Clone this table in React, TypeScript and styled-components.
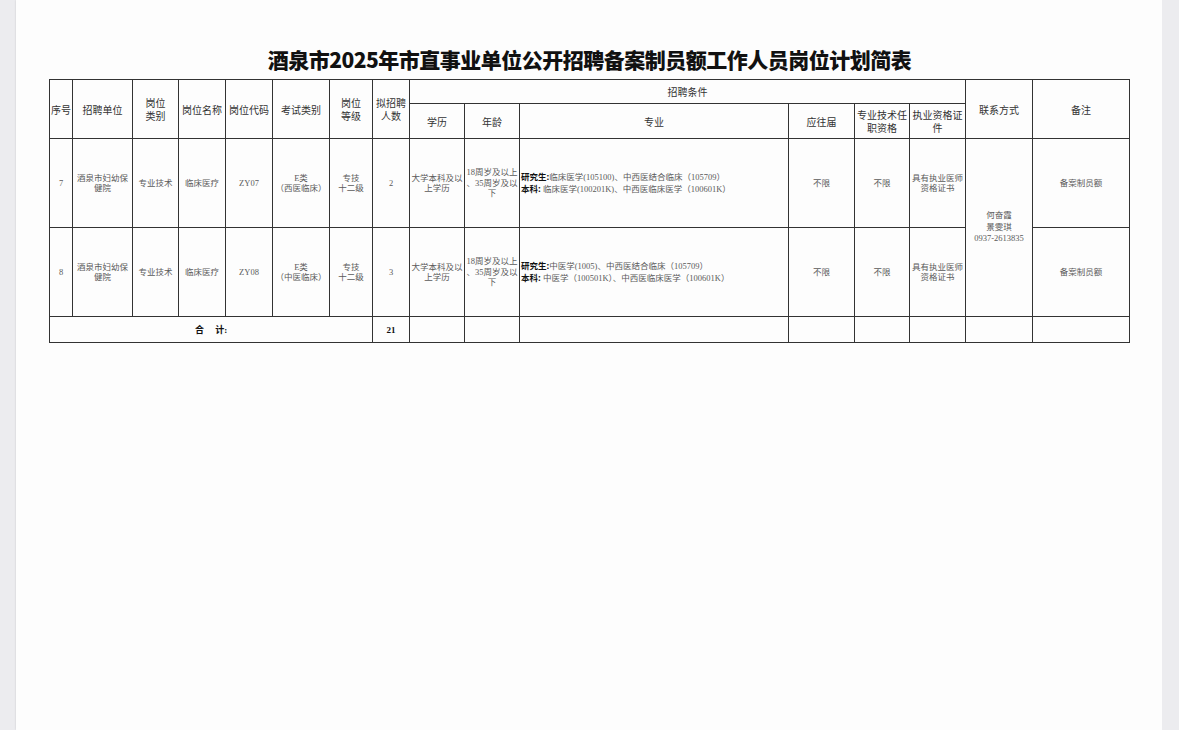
import React from 'react';
import styled, { createGlobalStyle } from 'styled-components';

const GlobalStyle = createGlobalStyle`
  html, body {
    margin: 0;
    padding: 0;
    background: #ececef;
  }
  #root {
    height: 730px;
  }
`;

const CJK_SANS = `"Noto Sans CJK SC", "Noto Sans", sans-serif`;
const CJK_SERIF = `"Liberation Serif", "Noto Sans CJK SC", serif`;

interface RowData {
  no: string;
  unit: string[];
  postType: string;
  postName: string;
  code: string;
  exam: string[];
  level: string[];
  count: string;
  edu: string[];
  age: string[];
  grad: string;
  bachelor: string;
}

const rows: RowData[] = [
  {
    no: '7',
    unit: ['酒泉市妇幼保', '健院'],
    postType: '专业技术',
    postName: '临床医疗',
    code: 'ZY07',
    exam: ['E类', '（西医临床）'],
    level: ['专技', '十二级'],
    count: '2',
    edu: ['大学本科及以', '上学历'],
    age: ['18周岁及以上', '、35周岁及以', '下'],
    grad: '临床医学(105100)、中西医结合临床（105709）',
    bachelor: ' 临床医学(100201K)、中西医临床医学（100601K）',
  },
  {
    no: '8',
    unit: ['酒泉市妇幼保', '健院'],
    postType: '专业技术',
    postName: '临床医疗',
    code: 'ZY08',
    exam: ['E类', '（中医临床）'],
    level: ['专技', '十二级'],
    count: '3',
    edu: ['大学本科及以', '上学历'],
    age: ['18周岁及以上', '、35周岁及以', '下'],
    grad: '中医学(1005)、中西医结合临床（105709）',
    bachelor: ' 中医学（100501K）、中西医临床医学（100601K）',
  },
];

const colWidths = [23, 60, 46, 47, 47, 57, 43, 37, 55, 55, 269, 66, 55, 56, 67, 97];

function Lines({ items }: { items: string[] }) {
  return (
    <>
      {items.map((t, i) => (
        <React.Fragment key={i}>
          {i > 0 && <br />}
          {t}
        </React.Fragment>
      ))}
    </>
  );
}

function App() {
  return (
    <>
      <GlobalStyle />
      <Shell>
        <Gutter />
        <Page>
          <Title>酒泉市2025年市直事业单位公开招聘备案制员额工作人员岗位计划简表</Title>
          <Sheet>
            <colgroup>
              {colWidths.map((w, i) => (
                <col key={i} style={{ width: w }} />
              ))}
            </colgroup>
            <thead>
              <HeadRow height={24}>
                <HeadCell rowSpan={2}>序号</HeadCell>
                <HeadCell rowSpan={2}>招聘单位</HeadCell>
                <HeadCell rowSpan={2}>岗位<br />类别</HeadCell>
                <HeadCell rowSpan={2}>岗位名称</HeadCell>
                <HeadCell rowSpan={2}>岗位代码</HeadCell>
                <HeadCell rowSpan={2}>考试类别</HeadCell>
                <HeadCell rowSpan={2}>岗位<br />等级</HeadCell>
                <HeadCell rowSpan={2}>拟招聘<br />人数</HeadCell>
                <HeadCell colSpan={6}>招聘条件</HeadCell>
                <HeadCell rowSpan={2}>联系方式</HeadCell>
                <HeadCell rowSpan={2}>备注</HeadCell>
              </HeadRow>
              <HeadRow height={35}>
                <HeadCell>学历</HeadCell>
                <HeadCell>年龄</HeadCell>
                <HeadCell>专业</HeadCell>
                <HeadCell>应往届</HeadCell>
                <HeadCell>专业技术任<br />职资格</HeadCell>
                <HeadCell>执业资格证<br />件</HeadCell>
              </HeadRow>
            </thead>
            <tbody>
              {rows.map((r, idx) => (
                <BodyRow key={r.no} height={89}>
                  <Cell>{r.no}</Cell>
                  <Cell><Lines items={r.unit} /></Cell>
                  <Cell>{r.postType}</Cell>
                  <Cell>{r.postName}</Cell>
                  <Cell>{r.code}</Cell>
                  <Cell><Lines items={r.exam} /></Cell>
                  <Cell><Lines items={r.level} /></Cell>
                  <Cell>{r.count}</Cell>
                  <Cell tight><Lines items={r.edu} /></Cell>
                  <Cell tight><Lines items={r.age} /></Cell>
                  <MajorCell>
                    <MajorLabel>研究生:</MajorLabel>{r.grad}
                    <br />
                    <MajorLabel>本科:</MajorLabel>{r.bachelor}
                  </MajorCell>
                  <Cell>不限</Cell>
                  <Cell>不限</Cell>
                  <Cell tight><Lines items={['具有执业医师', '资格证书']} /></Cell>
                  {idx === 0 && (
                    <ContactCell rowSpan={2}>
                      <Lines items={['何奋霞', '景雯琪', '0937-2613835']} />
                    </ContactCell>
                  )}
                  <Cell>备案制员额</Cell>
                </BodyRow>
              ))}
              <BodyRow height={26}>
                <TotalCell colSpan={7}>合&nbsp;&nbsp;&nbsp;&nbsp;&nbsp;计:</TotalCell>
                <TotalCell>21</TotalCell>
                {Array.from({ length: 8 }).map((_, i) => (
                  <Cell key={i} />
                ))}
              </BodyRow>
            </tbody>
          </Sheet>
        </Page>
        <Gutter right />
      </Shell>
    </>
  );
}

const Shell = styled.div`
  display: flex;
  height: 730px;
  background: #ececef;
`;

const Gutter = styled.div<{ right?: boolean }>`
  flex: 0 0 ${({ right }) => (right ? '17px' : '16px')};
  background: #ececef;
`;

const Page = styled.div`
  flex: 1;
  background: #fdfdfd;
  box-shadow: 0 0 2px rgba(0, 0, 0, 0.15);
  padding: 46px 0 0 33px;
  box-sizing: border-box;
`;

const Title = styled.h1`
  margin: 0 0 7px;
  width: 1081px;
  text-align: center;
  font-family: ${CJK_SANS};
  font-size: 21px;
  line-height: 26px;
  font-weight: 900;
  color: #111;
  letter-spacing: -0.5px;
`;

const Sheet = styled.table`
  border-collapse: collapse;
  table-layout: fixed;
  width: 1081px;
  border: 1.5px solid #333;
`;

const HeadRow = styled.tr<{ height: number }>`
  height: ${({ height }) => height}px;
`;

const BodyRow = styled.tr<{ height: number }>`
  height: ${({ height }) => height}px;
`;

const HeadCell = styled.th`
  border: 1px solid #333;
  border-bottom-width: 1.5px;
  padding: 0 1px;
  font-family: ${CJK_SANS};
  font-size: 10px;
  line-height: 13px;
  font-weight: 400;
  color: #333;
  text-align: center;
  vertical-align: middle;
  white-space: nowrap;
`;

const Cell = styled.td<{ tight?: boolean }>`
  border: 1px solid #333;
  padding: 0 ${({ tight }) => (tight ? '0' : '2px')};
  font-family: ${CJK_SERIF};
  font-size: 8.5px;
  line-height: 10.5px;
  color: #5a5a5a;
  text-align: center;
  vertical-align: middle;
  white-space: nowrap;
  overflow: hidden;
`;

const MajorCell = styled(Cell)`
  text-align: left;
  padding: 0 1px;
  line-height: 11px;
`;

const MajorLabel = styled.span`
  font-family: ${CJK_SANS};
  font-weight: 700;
  color: #111;
`;

const ContactCell = styled(Cell)`
  line-height: 11.5px;
`;

const TotalCell = styled.td`
  border: 1px solid #333;
  font-family: ${CJK_SERIF};
  font-size: 9px;
  font-weight: 700;
  color: #111;
  text-align: center;
  vertical-align: middle;
`;

export default App;
